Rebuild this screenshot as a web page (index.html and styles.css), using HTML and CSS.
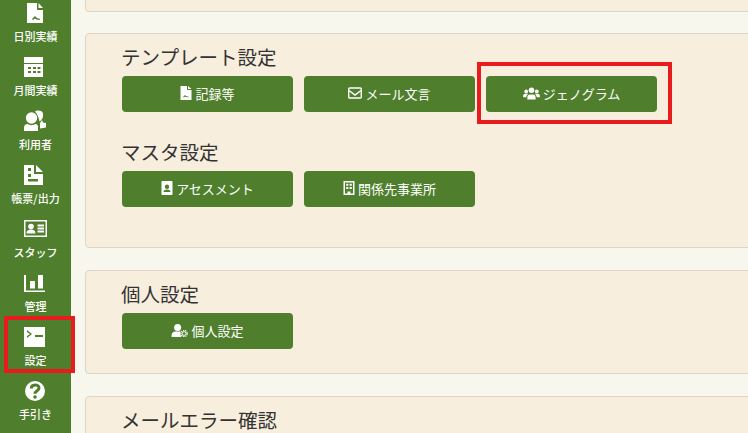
FILE: index.html
```html
<!DOCTYPE html>
<html lang="ja">
<head>
    <meta charset="UTF-8">
    <meta name="viewport" content="width=device-width, initial-scale=1.0">
    <title>設定</title>
    <link rel="stylesheet" href="styles.css">
</head>
<body>
    <div class="sidebar">
        <a class="nav-item">
            <svg class="nav-icon" viewBox="0 0 25 24"><path fill="#fff" fill-rule="evenodd" d="M4 2h10v6c0 .6.400 1 1 1h5v13H4zM9 18l3-3 2 2 3 1v1l-3.500-.5-1.500-1-2 1.500z"/><path fill="#fff" d="M15.500 2l4.500 5h-4.500z"/></svg>
            <span>日別実績</span>
        </a>
        <a class="nav-item">
            <svg class="nav-icon" viewBox="0 0 25 24"><path fill="#fff" fill-rule="evenodd" d="M1 2h19v6H1zM1 9h19v13H1zM5 12v2h3v-2zM10 12v2h3v-2zM14.500 12v2h3v-2zM5 16v2h3v-2zM10 16v2h3v-2zM14.500 16v2h3v-2z"/></svg>
            <span>月間実績</span>
        </a>
        <a class="nav-item">
            <svg class="nav-icon" viewBox="0 0 25 24"><path fill="#fff" d="M12 2.500c1-1 4-1.500 6-.5 2.500 1.200 2.500 4.500 1.500 7-.5 1.200-1.500 2.500-3 3.500-.5-3-1.500-6.500-4.500-10z"/><circle cx="8.500" cy="9" r="5.700" fill="#fff"/><path fill="#fff" d="M1 22v-3.500c0-2 1.500-3.500 3.500-3.500 2 1.500 6 1.500 8 0 1.500 0 2.500 1 2.500 3v4zM19 11l1 2.500 3 .5v4.500l-6 1V14z"/></svg>
            <span>利用者</span>
        </a>
        <a class="nav-item">
            <svg class="nav-icon" viewBox="0 0 25 24"><path fill="#fff" fill-rule="evenodd" d="M1 2h10v9h9v11H1zM5 5v3h3V5zM5 11v3h3v-3zM5 16v2.500h10V16z"/><path fill="#fff" d="M13 2l7 7h-7z"/></svg>
            <span>帳票/出力</span>
        </a>
        <a class="nav-item">
            <svg class="nav-icon" viewBox="0 0 25 24"><path fill="#fff" fill-rule="evenodd" d="M1 3h23v17H1zM2.500 4.500v14h20v-14z"/><circle cx="8" cy="9.500" r="2.800" fill="#fff"/><path fill="#fff" d="M3.500 16.500c0-3 1.800-4 4.500-4s4.500 1 4.500 4zM14.500 7.500h6.500v2h-6.500zM14.500 10.500h6.500v2h-6.500zM14.500 13.500h6.500v2h-6.500z"/></svg>
            <span>スタッフ</span>
        </a>
        <a class="nav-item">
            <svg class="nav-icon" viewBox="0 0 25 24"><path fill="#fff" d="M1 4h2v15.500h19V21H1zM7 10h5v7.500H7zM15 4h5v13.500h-5z"/></svg>
            <span>管理</span>
        </a>
        <a class="nav-item">
            <svg class="nav-icon" viewBox="0 0 25 24"><path fill="#fff" fill-rule="evenodd" d="M1 2h21v20H1zM4 5v2l3 2-3 2v2l5-4zM12 10v2h8v-2z"/></svg>
            <span>設定</span>
            <div class="mark mark-nav"></div>
        </a>
        <a class="nav-item">
            <svg class="nav-icon" viewBox="0 0 25 24"><circle cx="12" cy="12" r="10" fill="#fff"/><path fill="none" stroke="#4f7f2d" stroke-width="3" d="M8.300 9.500c0-4.700 7.700-4.700 7.700-.5 0 2.800-4 2.800-4 5.800"/><circle cx="12" cy="18" r="1.800" fill="#4f7f2d"/></svg>
            <span>手引き</span>
        </a>
    </div>

    <div class="main">
        <div class="card card-cut"></div>

        <div class="card card-tall">
            <div class="group">
                <h2>テンプレート設定</h2>
                <div class="buttons">
                    <a class="btn">
                        <svg class="btn-icon" viewBox="0 0 12 14"><path fill="#fff" fill-rule="evenodd" d="M.500 0h6.500v3.500c0 .3.200.5.500.5h4v10H.500zM3 11l2-2 1 1 2.500.8v.7L6 11l-1-.5-1 1z"/><path fill="#fff" d="M8 0l3.500 3H8z"/></svg>
                        記録等
                    </a>
                    <a class="btn">
                        <svg class="btn-icon btn-icon-wide" viewBox="0 0 14 12"><rect x=".7" y="1" width="12.600" height="10" rx="1" fill="none" stroke="#fff" stroke-width="1.400"/><path fill="none" stroke="#fff" stroke-width="1.400" d="M1 3.500l6 4.500 6-4.500"/></svg>
                        メール文言
                    </a>
                    <div class="mark-wrap">
                        <a class="btn">
                            <svg class="btn-icon btn-icon-users" viewBox="0 0 18 14"><circle cx="9" cy="3.500" r="3" fill="#fff"/><circle cx="3.300" cy="4.800" r="2" fill="#fff"/><circle cx="14.700" cy="4.800" r="2" fill="#fff"/><path fill="#fff" d="M4.500 13.500v-2c0-2.200 1.200-3.500 3-3.500h3c1.800 0 3 1.300 3 3.500v2zM0 11V9.500C0 8 1 7.200 2.300 7.200h2c.4 0 .7.100 1 .300C4 8.300 3.500 9.500 3.500 11zM18 11V9.500c0-1.500-1-2.300-2.300-2.300h-2c-.4 0-.7.100-1 .300 1.300.8 1.800 2 1.800 3.500z"/></svg>
                            ジェノグラム
                        </a>
                        <div class="mark mark-btn"></div>
                    </div>
                </div>
            </div>
            <div class="group">
                <h2>マスタ設定</h2>
                <div class="buttons">
                    <a class="btn">
                        <svg class="btn-icon" viewBox="0 0 12 14"><path fill="#fff" fill-rule="evenodd" d="M1.500 0h9c.6 0 1 .4 1 1v12c0 .6-.4 1-1 1h-9c-.6 0-1-.4-1-1V1c0-.6.400-1 1-1zM6 3.500a2.200 2.200 0 100 4.400 2.200 2.200 0 000-4.400zM2.500 11h7c0-1.800-1.200-2.600-3.500-2.600S2.500 9.200 2.500 11z"/></svg>
                        アセスメント
                    </a>
                    <a class="btn">
                        <svg class="btn-icon" viewBox="0 0 12 14"><path fill="#fff" fill-rule="evenodd" d="M.500 0h11v14H.500zM2 1.500v11h2.500v-2h3v2H10v-11z"/><path fill="#fff" d="M3.200 2.800h2.200v2H3.200zM6.600 2.800h2.200v2H6.600zM3.200 6h2.200v2H3.200zM6.600 6h2.200v2H6.600z"/></svg>
                        関係先事業所
                    </a>
                </div>
            </div>
        </div>

        <div class="card">
            <div class="group">
                <h2>個人設定</h2>
                <div class="buttons">
                    <a class="btn">
                        <svg class="btn-icon btn-icon-users" viewBox="0 0 18 14"><circle cx="7" cy="3.800" r="3.800" fill="#fff"/><path fill="#fff" d="M.500 14v-2c0-2.500 2-4 4-4h5c.8 0 1.500.2 2 .5L10 10.500l1 3.500z"/><circle cx="14" cy="10.300" r="3.900" fill="#4f7f2d"/><circle cx="14" cy="10.300" r="3.300" fill="none" stroke="#fff" stroke-width="1.300" stroke-dasharray="1.500 .8"/><circle cx="14" cy="10.300" r="2" fill="none" stroke="#fff" stroke-width="1"/></svg>
                        個人設定
                    </a>
                </div>
            </div>
        </div>

        <div class="card">
            <div class="group">
                <h2>メールエラー確認</h2>
            </div>
        </div>
    </div>
</body>
</html>
```

FILE: styles.css
```css
body {
    font-family: "Noto Sans CJK JP", "Noto Sans", sans-serif;
    display: flex;
    height: 433px;
    margin: 0;
    background-color: #f8f7ee;
    overflow: hidden;
    color: #333;
}
a {
    color: #fff;
    text-decoration: none;
}

/* sidebar */
.sidebar {
    flex: 0 0 71px;
    height: 433px;
    background-color: #4f7f2d;
}
.nav-item {
    display: flex;
    flex-direction: column;
    align-items: center;
    gap: 4px;
    height: 42px;
    padding: 6px 0;
    font-size: 11px;
    font-weight: 500;
    line-height: 14px;
    position: relative;
}
.nav-item:first-child {
    margin-top: -5px;
}
.nav-icon {
    width: 25px;
    height: 24px;
    flex: none;
}

/* red marks over the screenshot */
.mark {
    position: absolute;
    border: 4px solid #e81c1c;
    box-sizing: border-box;
}
.mark-nav {
    left: 4px;
    top: -3px;
    width: 71px;
    height: 57px;
}
.mark-wrap {
    position: relative;
}
.mark-btn {
    left: -9px;
    top: -14px;
    width: 195px;
    height: 62px;
}

/* main */
.main {
    flex: 1;
    min-width: 0;
    padding-left: 14px;
}
.card {
    background-color: #f7eedd;
    border: 1px solid #ddd5c5;
    border-radius: 4px;
    margin: 0 -10px 22px 0;
    padding: 11px 36px 24px;
}
.card-cut {
    height: 12px;
    margin-bottom: 21px;
    padding: 0;
    border-top: 0;
    border-radius: 0 0 4px 4px;
    box-sizing: border-box;
}
.card-tall {
    height: 215px;
    box-sizing: border-box;
}
.group + .group {
    margin-top: 28px;
}
h2 {
    font-size: 19.5px;
    font-weight: 400;
    line-height: 23px;
    margin: 0 0 8px -1px;
}
.buttons {
    display: flex;
    gap: 11px;
}
.btn {
    display: flex;
    align-items: center;
    justify-content: center;
    gap: 3px;
    box-sizing: border-box;
    width: 171px;
    height: 36px;
    padding-bottom: 2px;
    background-color: #4f7f2d;
    border-radius: 4px;
    font-size: 13px;
}
.btn-icon {
    width: 12px;
    height: 14px;
}
.btn-icon-wide {
    width: 14px;
    height: 12px;
}
.btn-icon-users {
    width: 17px;
    height: 13px;
}
```
